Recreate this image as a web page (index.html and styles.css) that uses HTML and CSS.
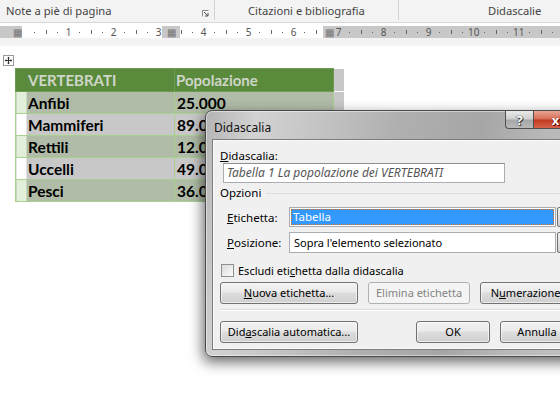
FILE: index.html
```html
<!DOCTYPE html>
<html lang="it">
<head>
<meta charset="utf-8">
<title>Didascalia</title>
<link rel="stylesheet" href="styles.css">
</head>
<body>
<div class="ribbon">
  <div class="rgroup g1"><span>Note a piè di pagina</span>
    <svg class="launcher" width="7" height="7" viewBox="0 0 7 7"><path d="M0.5 6.5V0.5H6.5" fill="none" stroke="#8a8a8a"/><path d="M2 2L6 6M6 3V6H3" fill="none" stroke="#555"/></svg>
  </div>
  <div class="rgroup g2"><span>Citazioni e bibliografia</span></div>
  <div class="rgroup g3"><span>Didascalie</span></div>
</div>
<div class="ruler">
  <div class="ticks">
    <i></i><i><b class="d"></b></i><i><b class="l"></b></i><i><b class="d"></b></i>
    <i>1</i><i><b class="d"></b></i><i><b class="l"></b></i><i><b class="d"></b></i>
    <i>2</i><i><b class="d"></b></i><i><b class="l"></b></i><i><b class="d"></b></i>
    <i>3</i><i><b class="d"></b></i><i><b class="l"></b></i><i><b class="d"></b></i>
    <i>4</i><i><b class="d"></b></i><i><b class="l"></b></i><i><b class="d"></b></i>
    <i>5</i><i><b class="d"></b></i><i><b class="l"></b></i><i><b class="d"></b></i>
    <i>6</i><i><b class="d"></b></i><i><b class="l"></b></i><i><b class="d"></b></i>
    <i>7</i><i><b class="d"></b></i><i><b class="l"></b></i><i><b class="d"></b></i>
    <i>8</i><i><b class="d"></b></i><i><b class="l"></b></i><i><b class="d"></b></i>
    <i>9</i><i><b class="d"></b></i><i><b class="l"></b></i><i><b class="d"></b></i>
    <i>10</i><i><b class="d"></b></i><i><b class="l"></b></i><i><b class="d"></b></i>
    <i>11</i><i><b class="d"></b></i><i><b class="l"></b></i><i><b class="d"></b></i>
  </div>
  <span class="marker m1">&#9638;</span>
  <span class="marker m2">&#9638;</span>
  <span class="marker m3">&#9638;</span>
</div>
<div class="page">
  <svg class="handle" width="11" height="11" viewBox="0 0 11 11"><rect x="0.5" y="0.5" width="10" height="10" fill="#fff" stroke="#9a9a9a"/><path d="M5.5 2V9M2 5.5H9" stroke="#333"/><path d="M5.5 1.8L4 3.3H7ZM5.5 9.2L4 7.7H7ZM1.8 5.5L3.3 4V7ZM9.2 5.5L7.7 4V7Z" fill="#333"/></svg>
  <table class="tbl">
    <tr class="hd"><td class="c1">VERTEBRATI</td><td class="c2">Popolazione</td><td class="ext"></td></tr>
    <tr class="band"><td class="c1">Anfibi</td><td class="c2">25.000</td><td class="ext"></td></tr>
    <tr class="plain"><td class="c1">Mammiferi</td><td class="c2">89.000</td><td class="ext"></td></tr>
    <tr class="band"><td class="c1">Rettili</td><td class="c2">12.000</td><td class="ext"></td></tr>
    <tr class="plain"><td class="c1">Uccelli</td><td class="c2">49.000</td><td class="ext"></td></tr>
    <tr class="band"><td class="c1">Pesci</td><td class="c2">36.000</td><td class="ext"></td></tr>
  </table>
</div>

<div class="dialog">
  <div class="titlebar">
    <span class="title">Didascalia</span>
    <div class="capbtns">
      <span class="cap help">?</span>
      <span class="cap close">x</span>
    </div>
  </div>
  <div class="client">
    <div class="lbl"><u>D</u>idascalia:</div>
    <div class="input">Tabella 1 La popolazione dei VERTEBRATI</div>
    <div class="group"><span>Opzioni</span><span class="gline"></span></div>
    <div class="frow">
      <span class="flbl"><u>E</u>tichetta:</span>
      <div class="select"><span class="sel">Tabella</span></div>
      <span class="drop"></span>
    </div>
    <div class="frow r2">
      <span class="flbl"><u>P</u>osizione:</span>
      <div class="select"><span class="val">Sopra l'elemento selezionato</span></div>
      <span class="drop"></span>
    </div>
    <div class="check"><span class="box"></span><span>Escludi eti<u>c</u>hetta dalla didascalia</span></div>
    <div class="brow">
      <span class="btn w1"><u>N</u>uova etichetta...</span>
      <span class="btn w2 dis">Elimina etichetta</span>
      <span class="btn w3">N<u>u</u>merazione...</span>
    </div>
    <div class="sep"></div>
    <div class="brow last">
      <span class="btn w1">Did<u>a</u>scalia automatica...</span>
      <span class="spacer"></span>
      <span class="btn w4">OK</span>
      <span class="btn w4">Annulla</span>
    </div>
  </div>
</div>
</body>
</html>
```
FILE: styles.css
```css
html, body { margin: 0; padding: 0; }
body {
  width: 560px; height: 400px; overflow: hidden; position: relative;
  background: #fff;
  font-family: "Noto Sans", "Open Sans", sans-serif;
}
u { text-decoration: underline; text-underline-offset: 1px; }

/* ribbon */
.ribbon {
  height: 22px; background: #f3f3f3; display: flex;
  border-bottom: 1px solid #d6d6d6;
  font-size: 11.2px; color: #444;
}
.rgroup { display: flex; align-items: center; box-sizing: border-box; height: 20px; position: relative; }
.g1 { width: 215px; padding-left: 6px; border-right: 1px solid #d4d4d4; }
.g1 .launcher { position: absolute; left: 202px; top: 10px; }
.g2 { width: 184px; padding-left: 33px; border-right: 1px solid #d4d4d4; }
.g3 { flex: 1; padding-left: 89px; }

/* ruler */
.ruler {
  position: relative; height: 12px; margin-top: 3px;
  background: linear-gradient(90deg, #c8c8c8 0 22px, #fff 22px 162px, #c8c8c8 162px 180px, #fff 180px 323px, #c8c8c8 323px);
  border-bottom: 8px solid #f3f3f3;
}
.ticks { display: flex; padding-left: 18px; height: 12px; align-items: center; }
.ticks i {
  flex: none; width: 11.25px; font-style: normal; font-size: 10px; line-height: 12px;
  text-align: center; color: #555; display: flex; justify-content: center; align-items: center;
}
.ticks b { display: block; width: 1px; background: #666; }
.ticks b.d { height: 1px; }
.ticks b.l { height: 4px; }
.marker { position: absolute; top: 0; height: 12px; line-height: 12px; font-size: 10px; color: #777; background: #c8c8c8; text-align: center; }
.m1 { left: 12px; width: 10px; }
.m2 { left: 162px; width: 18px; }
.m3 { left: 323px; width: 12px; }

/* page */
.page { position: relative; padding: 9px 0 0 3px; }
.handle { display: block; }
.tbl {
  margin: 2px 0 0 12px; border-collapse: collapse;
  font-family: "Lato", "Liberation Sans", sans-serif; font-weight: 700; font-size: 15.5px;
}
.tbl td { height: 22px; padding: 0 0 0 12px; border: 1px solid #a9d18e; box-sizing: border-box; line-height: 20px; }
.tbl .c1 { width: 159px; }
.tbl .c2 { width: 159px; padding-left: 2px; }
.tbl td.ext { width: 10px; padding: 0; border: 0; border-top: 1px solid #fff; background: #c8c8c8; }
.hd td { height: 23px; color: #cfd6c8; background: #5a8a3c; border-color: #6e9b52; font-size: 15px; }
.hd .c2 { border-left: 1px dotted #b8c4b0; padding-left: 1px; }
.hd td.ext { border-top: 0; }
.band .c1 { background: linear-gradient(90deg, #e2efd9 0 10px, #b0bca8 10px); }
.band .c2 { background: #b0bca8; }
.plain .c1 { background: linear-gradient(90deg, #fff 0 10px, #c8c8c8 10px); }
.plain .c2 { background: #c8c8c8; }
.tbl tr:not(.hd) td { color: #000; }

/* dialog */
.dialog {
  position: absolute; left: 205px; top: 110px; width: 387px; height: 247px;
  box-sizing: border-box; border: 1px solid #4a4a4a; border-radius: 7px;
  background: linear-gradient(100deg, #b4b4b4 0%, #d2d2d2 12%, #c6c6c6 25%, #b0b0b0 45%, #a6a6a6 65%, #b8b8b8 80%, #c4c4c4 100%);
  box-shadow: -2px 5px 14px rgba(0,0,0,.6), inset 0 0 0 1px rgba(255,255,255,.45);
  padding: 0 6px 6px 6px; display: flex; flex-direction: column;
  font-size: 11px; color: #000;
}
.titlebar { height: 28px; display: flex; align-items: flex-start; position: relative; }
.title { margin: 8px 0 0 2px; font-size: 12px; color: #111; }
.capbtns { position: absolute; left: 293px; top: 0; display: flex; }
.cap { height: 18px; box-sizing: border-box; border: 1px solid #505050; border-top: 0; display: flex; align-items: center; justify-content: center; font-weight: 700; color: #fff; font-size: 13px; }
.help {
  width: 29px; border-radius: 0 0 0 4px;
  background: linear-gradient(#eaeaea 0%, #cfcfcf 45%, #a8a8a8 55%, #b8b8b8 100%);
  text-shadow: 0 0 1px #333, 0 0 1px #333, 1px 1px 0 #444;
}
.close {
  width: 44px; border-left: 0;
  background: linear-gradient(#e9a593 0%, #d8705a 45%, #c33a20 55%, #d5634a 100%);
  text-shadow: 0 0 1px #600, 1px 1px 0 #600;
}
.client {
  flex: 1; background: #f0f0f0; border: 1px solid #7c7c7c;
  box-shadow: inset 0 0 0 1px #fafafa;
  padding: 8px 0 0 7px; display: flex; flex-direction: column;
}
.lbl { height: 15px; line-height: 15px; font-size: 11.5px; }
.input {
  margin-left: 3px; width: 282px; height: 20px; box-sizing: border-box;
  border: 1px solid #abadb3; border-top-color: #8e8f8f; background: #fff;
  font-style: italic; color: #555; line-height: 18px; padding-left: 3px; font-size: 12px;
}
.group { display: flex; align-items: center; height: 12px; margin-top: 4px; line-height: 12px; font-size: 11.5px; }
.gline { flex: 1; height: 1px; background: #d5dfe5; margin-left: 5px; }
.frow { display: flex; align-items: center; margin-top: 8px; height: 20px; }
.frow.r2 { margin-top: 5px; height: 21px; }
.flbl { width: 69px; padding-left: 7px; box-sizing: border-box; font-size: 11.5px; }
.select {
  width: 267px; height: 100%; box-sizing: border-box; border: 1px solid #abadb3; background: #fff;
  padding: 1px; display: flex;
}
.sel { flex: 1; background: #3399ff; color: #fff; outline: 1px dotted #e07020; outline-offset: -1px; padding-left: 2px; line-height: 16px; font-size: 11.5px; }
.val { padding-left: 3px; line-height: 17px; }
.drop { width: 16px; height: 100%; box-sizing: border-box; margin-left: 1px; border: 1px solid #707070; border-radius: 2px; background: linear-gradient(#f2f2f2, #d0d0d0); }
.check { display: flex; align-items: center; margin-top: 11px; height: 13px; }
.box { width: 13px; height: 13px; box-sizing: border-box; border: 1px solid #8e8f8f; background: linear-gradient(135deg, #dcdcdc, #fbfbfb); margin: 0 4px 0 1px; }
.brow { display: flex; margin-top: 5px; height: 22px; }
.btn {
  height: 22px; box-sizing: border-box; border: 1px solid #707070; border-radius: 3px;
  background: linear-gradient(#f2f2f2 0%, #ebebeb 45%, #dddddd 50%, #cfcfcf 100%);
  box-shadow: inset 0 0 0 1px rgba(255,255,255,.6);
  display: flex; align-items: center; justify-content: center; line-height: 20px; flex: none;
}
.btn.dis { border-color: #adb2b5; background: #f4f4f4; color: #838383; box-shadow: none; }
.w1 { width: 138px; }
.w2 { width: 102px; margin-left: 10px; }
.w3 { width: 100px; margin-left: 10px; }
.w4 { width: 74px; margin-left: 10px; }
.spacer { width: 48px; }
.sep { height: 1px; background: #dcdcdc; border-bottom: 1px solid #fff; margin-top: 5px; }
.brow.last { margin-top: 10px; }
```
